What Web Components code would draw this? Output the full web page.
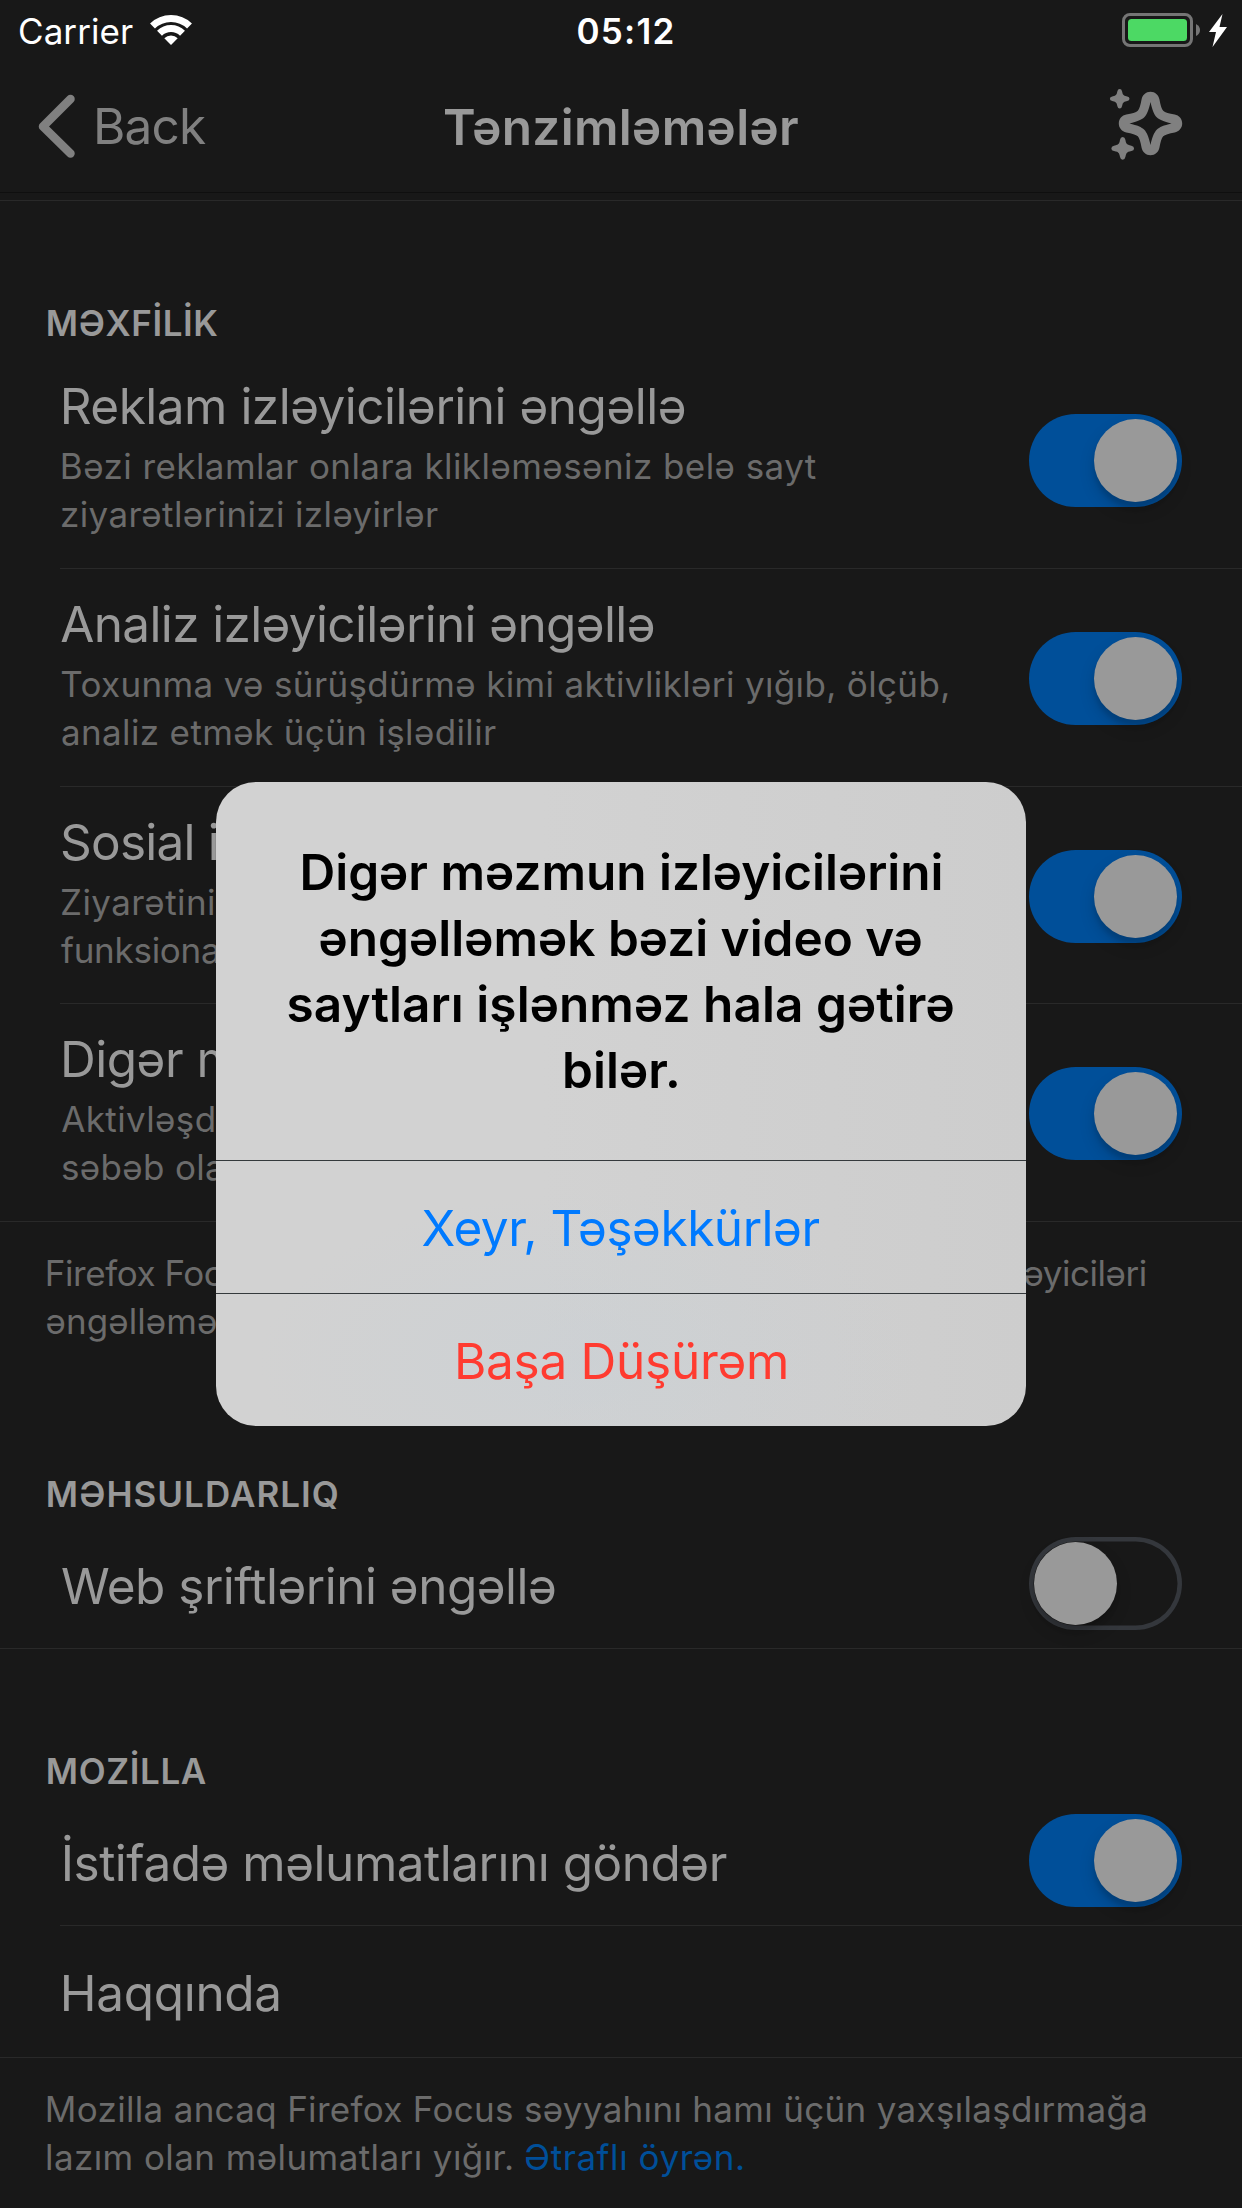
<!DOCTYPE html>
<html lang="az">
<head>
<meta charset="utf-8">
<title>Tənzimləmələr</title>
<style>
html,body{margin:0;background:#181818}
body{width:1242px;height:2208px;overflow:hidden;font-family:Inter,"Liberation Sans",sans-serif;font-size:49.5px;color:#999;position:relative}
</style>
</head>
<body>
<settings-screen></settings-screen>
<script>
const define=(name,html,init)=>customElements.define(name,class extends HTMLElement{
  connectedCallback(){
    if(this.shadowRoot)return;
    const r=this.attachShadow({mode:'open'});
    r.innerHTML=html;
    if(init)init.call(this,r);
  }
});

/* One line of text, tracked so that its ink spans the given width.
   "probe" limits the measure to the first letters of the line,
   "dx" is an optical correction of the left edge. */
const ctx=document.createElement('canvas').getContext('2d');
define('text-line','<style>:host{display:block;white-space:nowrap;flex:none}span{display:inline-block}</style><span><slot></slot></span>',function(r){
  const cs=getComputedStyle(this),text=this.textContent,probe=this.getAttribute('probe')||text;
  const ink=+this.getAttribute('ink'),dx=+(this.getAttribute('dx')||0);
  ctx.font=`${cs.fontWeight} ${cs.fontSize} ${cs.fontFamily}`;
  const m=ctx.measureText(probe);
  const natural=m.actualBoundingBoxRight+m.actualBoundingBoxLeft;
  const span=r.querySelector('span');
  span.style.letterSpacing=(ink-natural)/(probe.length-1)+'px';
  span.style.marginLeft=m.actualBoundingBoxLeft+dx+'px';
  this.style.width=ink+'px';
});

define('status-bar',`<style>
:host{display:grid;grid-template-columns:1fr auto 1fr;height:60px;padding:1px 15px 0 20px;box-sizing:border-box;color:#fff;font-size:35px;line-height:60px}
.l,.r{display:flex}.l{gap:17px}.r{justify-content:flex-end;gap:9px}
.t{font-weight:600;margin-left:4px}svg{display:block}
</style>
<div class="l"><text-line ink="113">Carrier</text-line>
<svg width="42" height="59" viewBox="150 1 42 59" fill="none" stroke="#fff" stroke-width="7"><path d="M152.5 26A26.5 26.5 0 0 1 189.5 26M159.5 33.2A16.5 16.5 0 0 1 182.5 33.2"/><path stroke="none" fill="#fff" d="M171 45L164.300 38.300A9.500 9.500 0 0 1 177.700 38.300Z"/></svg></div>
<text-line class="t" ink="95" dx="-0.5">05:12</text-line>
<div class="r"><svg width="78" height="59" viewBox="1122 1 78 59"><rect x="1123.500" y="14.500" width="68" height="31" rx="6.500" fill="none" stroke="#757575" stroke-width="3"/><rect x="1128" y="19" width="59" height="22" rx="3.500" fill="#4cd964"/><path fill="#757575" d="M1196 24Q1200 26 1200 30T1196 36Z"/></svg>
<svg width="18" height="59" viewBox="1209 1 18 59"><path fill="#fff" d="M1222.500 14L1209 32H1216L1212.500 47L1227 27H1219.500Z"/></svg></div>`);

define('nav-bar',`<style>
:host{display:grid;grid-template-columns:1fr auto 1fr;height:132px;border-bottom:1px solid #0f0f0f;line-height:60px}
.l{display:flex;padding-left:38px;gap:21px;color:#808080}
.l text-line{margin-top:36px}.t{font-weight:600;color:#999;margin-top:37px}
.r{display:flex;justify-content:flex-end;padding-right:42px}svg{display:block}
</style>
<div class="l"><svg width="38" height="132" viewBox="38 60 38 132"><path d="M70.500 99L43 126.500L70.500 153.500" fill="none" stroke="#808080" stroke-width="8.500" stroke-linecap="round" stroke-linejoin="round"/></svg><text-line ink="109">Back</text-line></div>
<text-line class="t" ink="353" dx="0.5">Tənzimləmələr</text-line>
<div class="r"><svg width="110" height="132" viewBox="0 -10 110 132">
<g fill="#808080"><path fill-rule="evenodd" transform="translate(60.500 53.500)" d="M0-31.700C4.600-31.700 8-28.500 8.900-24.200C10-18.500 11-14.500 12.700-12.700C14.500-11 18.500-10 24.200-8.900C28.500-8 31.700-4.600 31.700 0C31.700 4.600 28.500 8 24.200 8.900C18.500 10 14.500 11 12.700 12.700C11 14.500 10 18.500 8.900 24.200C8 28.500 4.600 31.700 0 31.700C-4.600 31.700-8 28.500-8.900 24.200C-10 18.500-11 14.500-12.700 12.700C-14.500 11-18.500 10-24.200 8.900C-28.500 8-31.700 4.600-31.700 0C-31.700-4.600-28.500-8-24.200-8.900C-18.500-10-14.500-11-12.700-12.700C-11-14.500-10-18.500-8.900-24.200C-8-28.500-4.600-31.700 0-31.700ZM0-21.500C-1.800-13-3.700-9-6.200-6.200C-9-3.700-13-1.800-21 0C-13 1.800-9 3.700-6.200 6.200C-3.700 9-1.800 13 0 21.500C1.800 13 3.700 9 6.200 6.200C9 3.700 13 1.800 21 0C13-1.800 9-3.700 6.200-6.200C3.700-9 1.800-13 0-21.500Z"/>
<path transform="translate(29.700 28.700)" d="M0-9.800Q1.900-9.800 2.300-7.500Q3-3.800 3.900-3.700Q4-3 7.500-2.300Q9.800-1.900 9.800 0T7.500 2.300Q4 3 3.900 3.700Q3 3.800 2.300 7.500Q1.900 9.800 0 9.800T-2.300 7.500Q-3 3.800-3.900 3.700Q-4 3-7.500 2.300Q-9.800 1.900-9.800 0T-7.500-2.300Q-4-3-3.900-3.700Q-3-3.800-2.300-7.500Q-1.900-9.800 0-9.800Z"/>
<path transform="translate(32.700 78.400) scale(1.160)" d="M0-9.800Q1.900-9.800 2.300-7.500Q3-3.800 3.900-3.700Q4-3 7.500-2.300Q9.800-1.900 9.800 0T7.500 2.300Q4 3 3.900 3.700Q3 3.800 2.300 7.500Q1.900 9.800 0 9.800T-2.300 7.500Q-3 3.800-3.900 3.700Q-4 3-7.500 2.300Q-9.800 1.900-9.800 0T-7.500-2.300Q-4-3-3.900-3.700Q-3-3.800-2.300-7.500Q-1.900-9.800 0-9.800Z"/></g></svg></div>`);

define('toggle-switch',`<style>
:host{display:flex;flex:none;box-sizing:border-box;width:153px;height:93px;border-radius:47px;padding:5px;box-shadow:inset 0 0 0 4.500px #34373c}
:host([on]){background:#004f99;box-shadow:none;justify-content:flex-end}
i{width:83px;height:83px;border-radius:50%;background:#999;box-shadow:0 8px 16px rgba(0,0,0,.15),0 6px 4px rgba(0,0,0,.1)}
</style><i></i>`);

define('section-heading',`<style>:host{display:block;box-sizing:border-box;height:150px;padding:98px 0 0 47px;font-size:35px;font-weight:600;line-height:48px}</style><slot></slot>`);

define('setting-row',`<style>
:host{display:flex;position:relative;justify-content:space-between;align-items:flex-start;box-sizing:border-box;height:218px;padding:0 60px 0 62px;line-height:60px}
:host::after{content:"";position:absolute;left:60px;right:0;bottom:0;height:1px;background:#292929}
:host([last])::after{left:0}
:host([short]){height:132px}
.c{display:block;padding-top:25px}
:host([short]) .c{padding-top:39px}
:host([plain]) .c{padding-top:37px}
.s{display:block;margin-top:6px;font-size:35px;line-height:48px;color:#6b6b6b}
.g{padding-top:63px}:host([short]) .g{padding-top:20px}
</style><div class="c"><slot name="title"></slot><div class="s"><slot></slot></div></div><div class="g"><slot name="control"></slot></div>`);

define('section-note',`<style>:host{display:block;padding:27px 0 0 47px;font-size:35px;line-height:48px;color:#6b6b6b}</style><slot></slot>`);

define('alert-dialog',`<style>
:host{position:absolute;left:216px;top:782px;width:810px;height:644px;border-radius:40px;overflow:hidden;display:flex;flex-direction:column;
background:radial-gradient(ellipse 330px 170px at 46% 90%,rgba(200,208,214,.5),rgba(205,208,210,0)),linear-gradient(90deg,#d2d2d2 40%,#cdcdcd)}
.m{height:378px;box-sizing:border-box;padding-top:57px;display:flex;flex-direction:column;align-items:center;color:#000;font-weight:600;line-height:66px}
</style><div class="m"><slot></slot></div><slot name="action"></slot>`);

define('alert-action',`<style>:host{display:flex;justify-content:center;box-sizing:border-box;height:133px;border-top:1px solid #34393c;padding-top:1px;line-height:132px;color:#007aff}:host([destructive]){color:#ff3b30}</style><slot></slot>`);

define('settings-screen',`<style>
:host{display:block}
.rule{height:1px;margin-top:7px;background:#292929}
.row{display:flex}
</style>
<status-bar></status-bar><nav-bar></nav-bar><div class="rule"></div>
<section-heading><text-line ink="169.500" dx="0.8">MƏXFİLİK</text-line></section-heading>
<setting-row><text-line slot="title" ink="621" dx="1.700">Reklam izləyicilərini əngəllə</text-line><text-line ink="753" dx="0.8">Bəzi reklamlar onlara klikləməsəniz belə sayt</text-line><text-line ink="376">ziyarətlərinizi izləyirlər</text-line><toggle-switch slot="control" on></toggle-switch></setting-row>
<setting-row><text-line slot="title" ink="592.500" dx="-0.8">Analiz izləyicilərini əngəllə</text-line><text-line ink="887" dx="-0.8">Toxunma və sürüşdürmə kimi aktivlikləri yığıb, ölçüb,</text-line><text-line ink="434">analiz etmək üçün işlədilir</text-line><toggle-switch slot="control" on></toggle-switch></setting-row>
<setting-row style="height:217px"><text-line slot="title" ink="130.500" probe="Sosial">Sosial izlər</text-line><text-line ink="152" probe="Ziyarətini">Ziyarətinizi</text-line><text-line ink="157" dx="-1" probe="funksiona">funksional</text-line><toggle-switch slot="control" on></toggle-switch></setting-row>
<setting-row last><text-line slot="title" ink="119" dx="2" probe="Digər">Digər mə</text-line><text-line ink="152.500" dx="-0.8" probe="Aktivləşd">Aktivləşdirmə</text-line><text-line ink="101" probe="səbəb">səbəb olar</text-line><toggle-switch slot="control" on></toggle-switch></setting-row>
<section-note><text-line ink="1098" dx="0.8">Firefox Focus-un Safari-də hansı reklam və digər məzmun izləyiciləri</text-line><text-line ink="190" dx="-0.5" probe="əngəlləmək">əngəlləməkdə</text-line></section-note>
<section-heading style="height:172px;padding-top:125px"><text-line ink="290" dx="0.8">MƏHSULDARLIQ</text-line></section-heading>
<setting-row short last><text-line slot="title" ink="493">Web şriftlərini əngəllə</text-line><toggle-switch slot="control"></toggle-switch></setting-row>
<section-heading style="height:145px"><text-line ink="158" dx="0.8">MOZİLLA</text-line></section-heading>
<setting-row short><text-line slot="title" ink="663" dx="1.700">İstifadə məlumatlarını göndər</text-line><toggle-switch slot="control" on></toggle-switch></setting-row>
<setting-row short plain last><text-line slot="title" ink="214.500" dx="1.800">Haqqında</text-line></setting-row>
<section-note><text-line ink="1097.500" dx="0.8">Mozilla ancaq Firefox Focus səyyahını hamı üçün yaxşılaşdırmağa</text-line><div class="row" style="gap:14px"><text-line ink="465">lazım olan məlumatları yığır.</text-line><text-line ink="217" style="color:#004f99">Ətraflı öyrən.</text-line></div></section-note>
<alert-dialog><text-line ink="639" dx="1">Digər məzmun izləyicilərini</text-line><text-line ink="601">əngəlləmək bəzi video və</text-line><text-line ink="665">saytları işlənməz hala gətirə</text-line><text-line ink="112">bilər.</text-line>
<alert-action slot="action"><text-line ink="397">Xeyr, Təşəkkürlər</text-line></alert-action><alert-action slot="action" destructive><text-line ink="328" dx="1">Başa Düşürəm</text-line></alert-action></alert-dialog>`);
</script>
</body>
</html>
